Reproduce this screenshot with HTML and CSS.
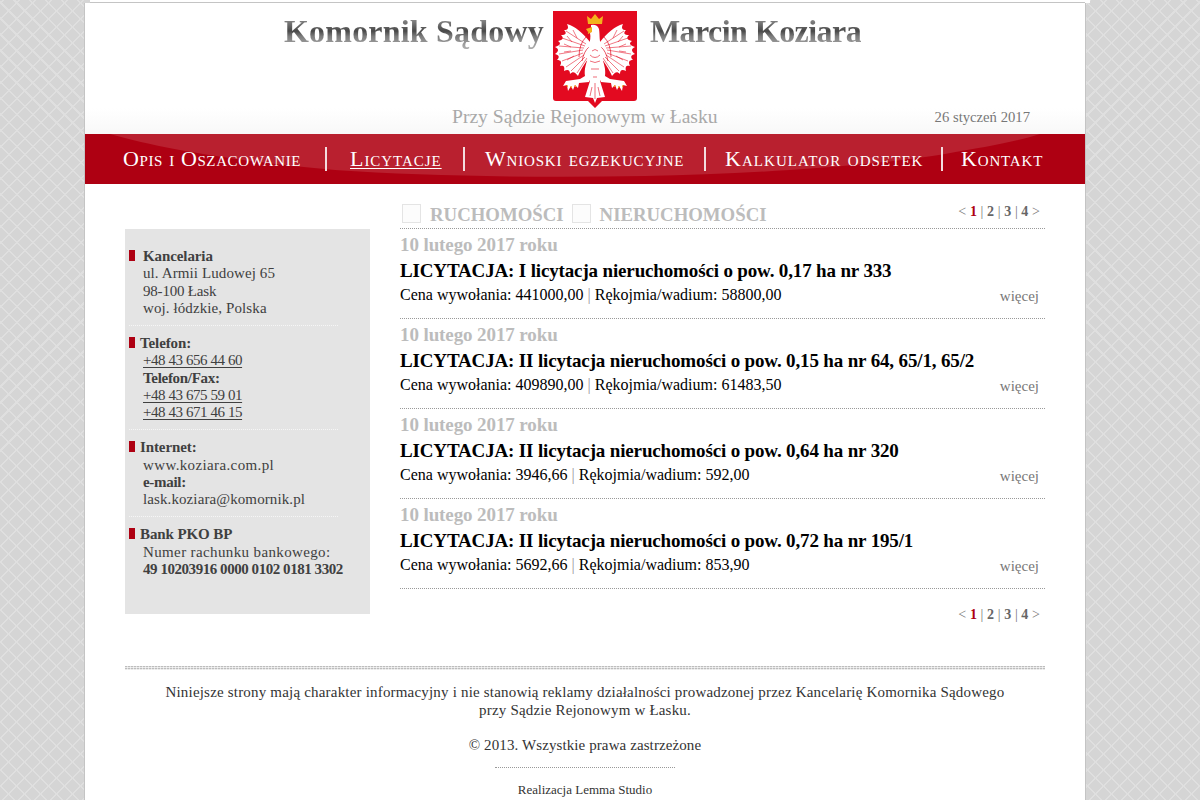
FILE: index.html
```html
<!DOCTYPE html>
<html lang="pl">
<head>
<meta charset="utf-8">
<title>Komornik Sądowy Marcin Koziara</title>
<link rel="stylesheet" href="styles.css">
</head>
<body>
<div class="topstrip"></div>
<div class="page">
  <header class="header">
    <div class="brand">
      <span class="brand-text first">Komornik Sądowy</span>
      <svg class="crest" viewBox="0 0 84 97" width="84" height="97" aria-hidden="true">
        <defs>
          <g id="wing">
            <path fill="#fff" d="M37 31C30 22 22 15 14 13C16 17 15 19 11 19C14 22 13 24 8 24C11 27 10 29 5 30C8 32 8 34 2 36C6 38 6 40 2 43C6 44 7 46 4 49C8 49 9 51 7 55C11 54 12 56 11 60C15 58 17 59 17 63C20 60 22 61 25 65C28 58 33 50 37 46Z"/>
            <path fill="#fff" d="M36 46C33 52 31 58 32 65L27 68L13 70L10 75L14 74L15 80L18 75L20 79L22 74L25 77L26 72L36 71L40 62Z"/>
            <path fill="none" stroke="#e30a20" stroke-width=".55" d="M33 33L13 20M32 35L9 27M31 37L6 35M30 39L6 43M30 42L9 50M31 44L13 56M32 46L18 60M34 47L24 62M20 19L24 27M14 25L19 31M11 33L18 36M11 41L18 40M14 49L21 45"/>
            <path fill="none" stroke="#e30a20" stroke-width=".7" d="M33 26Q26 33 26 46M36 36Q31 40 29 50"/>
            <path fill="none" stroke="#f3b31c" stroke-width="1" d="M14 74l.5 2M18 75l.5 2M22 74l.5 2"/>
          </g>
        </defs>
        <path d="M0 0H84V87Q84 90 81 90H49L42 97L35 90H3Q0 90 0 87Z" fill="#e30a20"/>
        <use href="#wing"/>
        <use href="#wing" transform="matrix(-1 0 0 1 84 0)"/>
        <path d="M38 14Q44 13 46 18C47 24 46 28 48 34L51 58L47 70L52 86L44 87L42 92L40 87L32 86L37 70L33 58L36 34C37 30 38 26 37 22L38 20Z" fill="#fff"/>
        <path d="M39 40Q42 37 45 40M37 44Q42 49 47 44M37 50Q42 53 47 50M38 58H46M40 66H44M42 72V88M39 76L37 85M45 76L47 85" stroke="#e30a20" stroke-width=".6" fill="none"/>
        <path d="M39 16L33 18L35 21L38 20Q34 21 35 23L39 21Z" fill="#f3b31c"/>
        <path d="M35 13L34 5L38 8L42 3L46 8L50 5L49 13Z" fill="#f3b31c"/>
      </svg>
      <span class="brand-text second">Marcin Koziara</span>
    </div>
    <div class="subline">
      <span class="court">Przy Sądzie Rejonowym w Łasku</span>
      <span class="today">26 styczeń 2017</span>
    </div>
  </header>

  <nav class="nav">
    <svg class="swoosh" viewBox="0 0 1000 50" preserveAspectRatio="none" aria-hidden="true">
      <path d="M25 0C80 16 160 28 250 36C340 42 450 44 560 42C680 40 800 30 860 20C900 13 930 8 955 0Z" fill="#b9202f"/>
    </svg>
    <ul class="nav-list">
      <li class="nav-item i1"><a href="#">Opis i Oszacowanie</a></li>
      <li class="nav-item i2"><a href="#" class="current">Licytacje</a></li>
      <li class="nav-item i3"><a href="#">Wnioski egzekucyjne</a></li>
      <li class="nav-item i4"><a href="#">Kalkulator odsetek</a></li>
      <li class="nav-item i5"><a href="#">Kontakt</a></li>
    </ul>
  </nav>

  <div class="columns">
    <aside class="side">
      <section class="side-block">
        <h3 class="side-head wide">Kancelaria</h3>
        <p class="side-line">ul. Armii Ludowej 65</p>
        <p class="side-line num-mix">98-100 Łask</p>
        <p class="side-line">woj. łódzkie, Polska</p>
      </section>
      <section class="side-block">
        <h3 class="side-head">Telefon:</h3>
        <p class="side-line num"><a href="#">+48 43 656 44 60</a></p>
        <p class="side-line"><b>Telefon/Fax:</b></p>
        <p class="side-line num"><a href="#">+48 43 675 59 01</a></p>
        <p class="side-line num"><a href="#">+48 43 671 46 15</a></p>
      </section>
      <section class="side-block">
        <h3 class="side-head">Internet:</h3>
        <p class="side-line loose">www.koziara.com.pl</p>
        <p class="side-line"><b>e-mail:</b></p>
        <p class="side-line">lask.koziara@komornik.pl</p>
      </section>
      <section class="side-block last">
        <h3 class="side-head">Bank PKO BP</h3>
        <p class="side-line loose">Numer rachunku bankowego:</p>
        <p class="side-line num"><b class="account">49 10203916 0000 0102 0181 3302</b></p>
      </section>
    </aside>

    <main class="main">
      <div class="tabs">
        <span class="box"></span><a class="tab t1" href="#">RUCHOMOŚCI</a>
        <span class="box"></span><a class="tab" href="#">NIERUCHOMOŚCI</a>
        <div class="pager top">&lt; <b class="on">1</b> | <b>2</b> | <b>3</b> | <b>4</b> &gt;</div>
      </div>

      <article class="item">
        <div class="date">10 lutego 2017 roku</div>
        <h2 class="title">LICYTACJA: I licytacja nieruchomości o pow. 0,17 ha nr 333</h2>
        <div class="row"><span class="price">Cena wywołania: 441000,00 <i>|</i> Rękojmia/wadium: 58800,00</span><a class="more" href="#">więcej</a></div>
      </article>
      <article class="item">
        <div class="date">10 lutego 2017 roku</div>
        <h2 class="title">LICYTACJA: II licytacja nieruchomości o pow. 0,15 ha nr 64, 65/1, 65/2</h2>
        <div class="row"><span class="price">Cena wywołania: 409890,00 <i>|</i> Rękojmia/wadium: 61483,50</span><a class="more" href="#">więcej</a></div>
      </article>
      <article class="item">
        <div class="date">10 lutego 2017 roku</div>
        <h2 class="title">LICYTACJA: II licytacja nieruchomości o pow. 0,64 ha nr 320</h2>
        <div class="row"><span class="price">Cena wywołania: 3946,66 <i>|</i> Rękojmia/wadium: 592,00</span><a class="more" href="#">więcej</a></div>
      </article>
      <article class="item">
        <div class="date">10 lutego 2017 roku</div>
        <h2 class="title">LICYTACJA: II licytacja nieruchomości o pow. 0,72 ha nr 195/1</h2>
        <div class="row"><span class="price">Cena wywołania: 5692,66 <i>|</i> Rękojmia/wadium: 853,90</span><a class="more" href="#">więcej</a></div>
      </article>

      <div class="pager bottom">&lt; <b class="on">1</b> | <b>2</b> | <b>3</b> | <b>4</b> &gt;</div>
    </main>
  </div>

  <footer class="footer">
    <div class="double-rule"></div>
    <p class="note">Niniejsze strony mają charakter informacyjny i nie stanowią reklamy działalności prowadzonej przez Kancelarię Komornika Sądowego<br>przy Sądzie Rejonowym w Łasku.</p>
    <p class="copy">© 2013. Wszystkie prawa zastrzeżone</p>
    <div class="short-rule"></div>
    <p class="credit">Realizacja Lemma Studio</p>
  </footer>
</div>
</body>
</html>
```
FILE: styles.css
```css
* { box-sizing: border-box; }
html, body { margin: 0; padding: 0; }
body {
  height: 800px;
  overflow: hidden;
  font-family: "Liberation Serif", "Times New Roman", serif;
  color: #333;
  background-color: #d5d5d5;
  background-image:
    repeating-linear-gradient(45deg, transparent 0 9.8px, #dfdfdf 9.8px 11.3px),
    repeating-linear-gradient(-45deg, transparent 0 9.8px, #dfdfdf 9.8px 11.3px);
}
a { color: inherit; }
h2, h3, p, ul { margin: 0; padding: 0; }

.topstrip {
  height: 3px;
  width: 1000px;
  margin-left: 90px;
  background: linear-gradient(#c4c4c4, #c4c4c4) 0 100% / 995px 1px no-repeat, #fff;
}
.page {
  width: 1002px;
  height: 797px;
  margin-left: 84px;
  background: #fff;
  border-left: 1px solid #c4c4c4;
  border-right: 1px solid #c4c4c4;
}

.header {
  height: 131px;
  padding-top: 8px;
  background: linear-gradient(#fff 80%, #f8f8f8);
}
.brand {
  display: flex;
  align-items: flex-start;
  margin-left: 199px;
  height: 97px;
}
.brand-text {
  font-size: 32px;
  font-weight: bold;
  line-height: 36px;
  margin-top: 2px;
  background: linear-gradient(#8f8f8f 15%, #484848 50%, #7c7c7c 65%, #aaa 95%);
  -webkit-background-clip: text;
  background-clip: text;
  color: transparent;
}
.brand-text.first { letter-spacing: .2px; }
.brand-text.second { letter-spacing: -.55px; }
.crest { margin: 0 13px 0 9px; flex: none; }
.subline {
  display: flex;
  align-items: flex-start;
  margin-top: -2px;
}
.court {
  margin-left: 367px;
  font-size: 19.6px;
  line-height: 22px;
  color: #a9a9a9;
}
.today {
  margin-left: 217px;
  font-size: 14.7px;
  line-height: 22px;
  color: #777;
}

.nav {
  position: relative;
  height: 50px;
  background: #ae0012;
}
.swoosh { position: absolute; inset: 0; width: 100%; height: 100%; }
.nav-list {
  position: relative;
  display: flex;
  list-style: none;
  padding-top: 13px;
}
.nav-item {
  height: 24px;
  line-height: 23px;
  font-size: 22px;
  font-variant: small-caps;
  white-space: nowrap;
  border-right: 2px solid #f3dcdf;
  color: #fff;
}
.nav-item a { text-decoration: none; color: #fff; }
.nav-item a.current { text-decoration: underline; text-decoration-thickness: 1px; text-underline-offset: 2px; }
.i1 { width: 242px; padding-left: 38px; letter-spacing: .62px; }
.i2 { width: 138px; padding-left: 23px; letter-spacing: .95px; }
.i3 { width: 241px; padding-left: 20px; letter-spacing: .82px; }
.i4 { width: 237px; padding-left: 19px; letter-spacing: 1.06px; }
.i5 { padding-left: 18px; border-right: 0; letter-spacing: .83px; }

.columns {
  display: flex;
  align-items: flex-start;
  padding: 20px 40px 0;
  gap: 30px;
}
.side {
  width: 245px;
  height: 385px;
  margin-top: 25px;
  background: #e4e4e4;
  padding-top: 19px;
  font-size: 15px;
  line-height: 17.3px;
  color: #404040;
}
.side-block {
  margin-left: 4px;
  width: 209px;
  padding-bottom: 7.8px;
  margin-bottom: 9px;
  border-bottom: 1px dotted #f6f6f6;
}
.side-block.last { border-bottom: 0; }
.side-head {
  position: relative;
  font-size: 15px;
  font-weight: bold;
  line-height: 17.3px;
  padding-left: 11px;
  letter-spacing: -.1px;
}
.side-head.wide { padding-left: 14px; }
.side-head::before {
  content: "";
  position: absolute;
  left: 0;
  top: 2px;
  width: 6px;
  height: 11px;
  background: #ae0012;
}
.side-line { padding-left: 14px; white-space: nowrap; letter-spacing: .1px; }
.side-line b { letter-spacing: -.3px; }
.side-line.loose { letter-spacing: .37px; }
.side-line.num { letter-spacing: -.43px; }
.side-line.num-mix { letter-spacing: -.2px; }
.side-line b.account { letter-spacing: -.45px; }
.side-line a { text-decoration: underline; text-underline-offset: 2px; }

.main { width: 645px; }
.tabs {
  display: flex;
  align-items: flex-start;
  height: 25px;
  border-bottom: 1px dotted #999;
}
.box {
  width: 19px;
  height: 19px;
  margin-left: 2px;
  flex: none;
  border: 1px solid #e4e4e4;
  background: #fcfcfc;
}
.tab {
  margin-left: 9px;
  font-size: 18.8px;
  line-height: 22px;
  font-weight: bold;
  color: #bcbcbc;
  text-decoration: none;
  white-space: nowrap;
}
.tab.t1 { margin-right: 6px; }
.pager {
  margin-left: auto;
  padding-right: 5px;
  font-size: 14px;
  line-height: 14px;
  letter-spacing: .08px;
  color: #777;
  white-space: nowrap;
}
.pager.top { margin-top: 1px; }
.pager b { color: #666; }
.pager b.on { color: #ae0012; }
.pager.bottom { text-align: right; margin-top: 19px; }

.item {
  height: 90px;
  padding-top: 4px;
  border-bottom: 1px dotted #999;
}
.date {
  font-size: 19px;
  font-weight: bold;
  line-height: 24px;
  letter-spacing: -.1px;
  color: #bcbcbc;
}
.title {
  font-size: 19px;
  font-weight: bold;
  line-height: 27px;
  color: #000;
  white-space: nowrap;
  letter-spacing: -.15px;
}
.row {
  display: flex;
  justify-content: space-between;
  align-items: flex-start;
  margin-top: 1px;
  font-size: 16px;
  line-height: 20px;
  color: #000;
}
.price i { font-style: normal; color: #999; }
.more {
  margin: 1px 6px 0 0;
  font-size: 15px;
  color: #777;
  text-decoration: none;
}

.footer {
  margin: 44px 40px 0;
  text-align: center;
  color: #333;
}
.double-rule {
  height: 4px;
  background:
    repeating-linear-gradient(90deg, transparent 0 2px, rgba(255, 255, 255, .55) 2px 3px),
    repeating-linear-gradient(#bdbdbd 0 1px, #e9e9e9 1px 2px);
}
.note { padding-top: 13px; font-size: 15px; line-height: 18px; letter-spacing: .19px; }
.copy { margin-top: 17px; font-size: 15px; line-height: 18px; letter-spacing: .1px; }
.short-rule { width: 180px; margin: 13px auto 0; border-top: 1px dotted #999; }
.credit { margin-top: 14px; font-size: 13px; line-height: 16px; }
```
